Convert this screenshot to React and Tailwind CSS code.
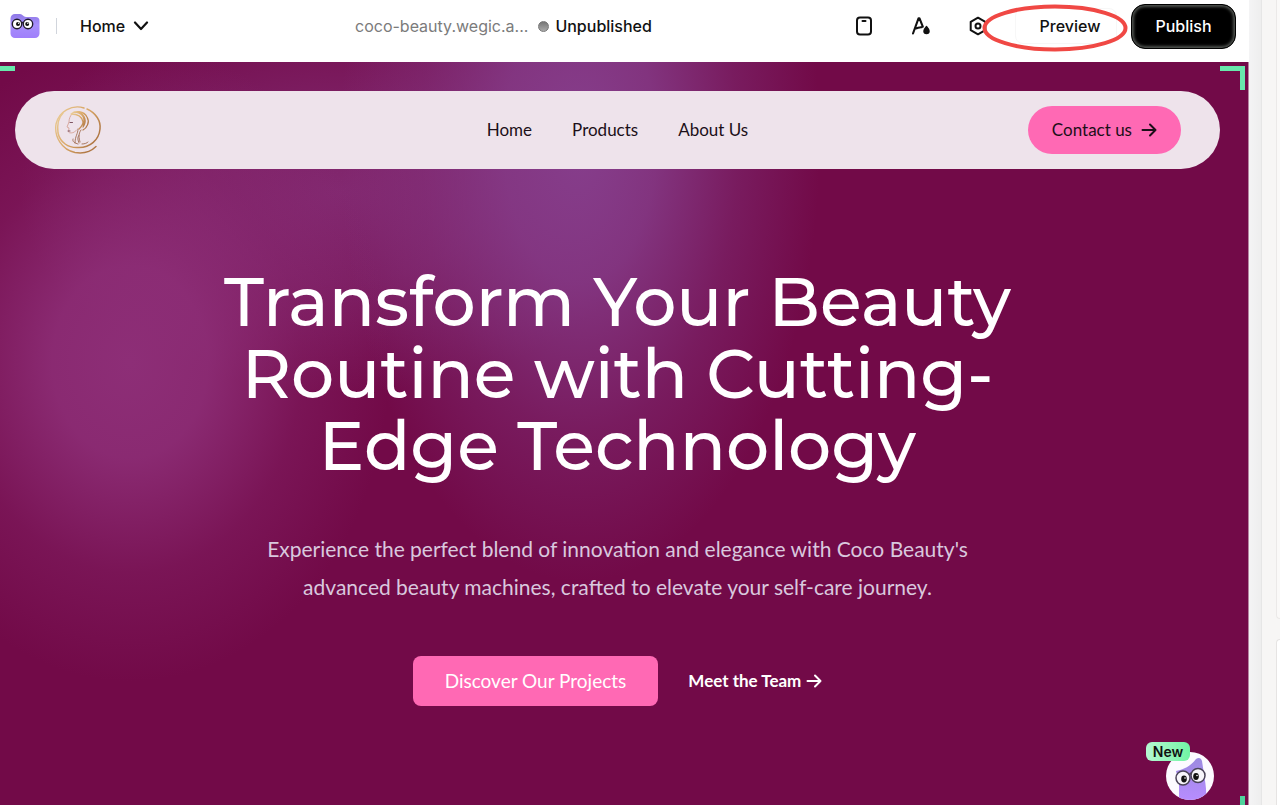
import React from "react";

const menuItems = ["Home", "Products", "About Us"];

const FolderLogo = () => (
    <svg viewBox="0 0 30 26" className="h-[26px] w-[30px]" aria-hidden="true">
        <defs>
            <linearGradient id="folder" x1="0" y1="0" x2="0" y2="1">
                <stop offset="0" stopColor="#8f79e6" />
                <stop offset="0.45" stopColor="#a78ffb" />
                <stop offset="1" stopColor="#a07ffb" />
            </linearGradient>
        </defs>
        <path
            d="M0.5 5.5a4.5 4.5 0 0 1 4.5-4.5h5c2.5 0 3.5 3 6 3h9.5a4 4 0 0 1 4 4v12.5a4.5 4.5 0 0 1-4.5 4.5h-20a4.5 4.5 0 0 1-4.5-4.5z"
            fill="url(#folder)"
        />
        <circle cx="7" cy="11" r="4.7" fill="#fff" stroke="#211c2c" strokeWidth="1.4" />
        <circle cx="18" cy="11" r="4.7" fill="#fff" stroke="#211c2c" strokeWidth="1.4" />
        <path d="M11.5 10q1-1 2 0" stroke="#211c2c" strokeWidth="1.5" fill="none" />
        <circle cx="8" cy="11" r="2" fill="#111" />
        <circle cx="17.2" cy="11" r="2" fill="#111" />
        <circle cx="8.6" cy="10.3" r="0.7" fill="#fff" />
        <circle cx="17.8" cy="10.3" r="0.7" fill="#fff" />
    </svg>
);

const ChevronIcon = () => (
    <svg viewBox="0 0 16 10" className="h-[10px] w-4" fill="none" stroke="#111" strokeWidth="2.2" strokeLinecap="round" strokeLinejoin="round" aria-hidden="true">
        <path d="M2 1.5l6 6.5 6-6.5" />
    </svg>
);

const DeviceIcon = () => (
    <svg viewBox="0 0 20 20" className="size-5" fill="none" stroke="#111" strokeWidth="2" aria-hidden="true">
        <rect x="3" y="1.5" width="14" height="17" rx="3" />
        <path d="M8.5 5h3" strokeLinecap="round" />
    </svg>
);

const ThemeIcon = () => (
    <svg viewBox="0 0 20 20" className="size-5" fill="none" stroke="#111" strokeWidth="2.1" strokeLinecap="round" strokeLinejoin="round" aria-hidden="true">
        <path d="M2 17.5L7.6 2.2h0.8l3.4 8.5M4.8 12.5c2-.3 4-1.5 5.6-1.2" />
        <path d="M15.5 10.5c1.6 1.9 2.6 3.1 2.6 4.4a2.6 2.6 0 0 1-5.2 0c0-1.3 1-2.5 2.6-4.4z" fill="#111" strokeWidth="1.3" />
    </svg>
);

const SettingsIcon = () => (
    <svg viewBox="0 0 20 20" className="size-5" fill="none" stroke="#111" strokeWidth="2" strokeLinejoin="round" aria-hidden="true">
        <path d="M10 1.7l7.3 4.1v8.4L10 18.3l-7.3-4.1V5.8z" />
        <circle cx="10" cy="10" r="2.5" />
    </svg>
);

const ArrowIcon = ({ className }) => (
    <svg viewBox="0 0 16 16" className={className} fill="none" stroke="currentColor" strokeLinecap="round" strokeLinejoin="round" aria-hidden="true">
        <path d="M1.5 8h13M9 2.5L14.5 8 9 13.5" />
    </svg>
);

const BrandLogo = () => (
    <svg viewBox="0 0 48 50" className="h-[50px] w-12" fill="none" strokeLinecap="round" aria-hidden="true">
        <defs>
            <linearGradient id="gold" x1="0" y1="0" x2="1" y2="0.6">
                <stop offset="0" stopColor="#ecd09c" />
                <stop offset="0.55" stopColor="#d9a766" />
                <stop offset="1" stopColor="#b07845" />
            </linearGradient>
        </defs>
        <path d="M30 3A22 22 0 0 0 2 19C0 32 8 45 21 47.5c9 1.5 16-1 21-6" stroke="url(#gold)" strokeWidth="1.4" />
        <path d="M33 4c9 4 14 12 13 20-1 11-10 18.5-21 18.5C14 43.5 6 37 4 28 3 20 5 12 9 8" stroke="url(#gold)" strokeWidth="1.5" />
        <path d="M18 9c-2 2-3 5-3 8l-2 5 2 1-.5 4c1 1.500 4 1 6 0l2-2" stroke="#d9aaa0" strokeWidth="1" />
        <path d="M17 9c4-4 13-3 16 3 3 5 0 11-4 13M17 9c6 0 11 2 12 8 0 3-2 5-4 7M20 7c8 0 12 6 9 13M25 7c6 3 8 9 4 15" stroke="url(#gold)" strokeWidth="1.3" />
        <path d="M24 24c0 5-3 7-3 14M27 25c-3 4-2 8-1 12M25 30c-2 3-1 5 0 8M19 34c-1 3 2 4 5 5M28 39c3 0 5-1 6-2" stroke="#a87860" strokeWidth="1" />
        <path d="M16 17.5h2.5M14 26h2" stroke="#7d5360" strokeWidth="1" />
    </svg>
);

const AssistantAvatar = () => (
    <svg viewBox="0 0 48 48" className="size-12" aria-hidden="true">
        <defs>
            <linearGradient id="monster" x1="0" y1="0" x2="0" y2="1">
                <stop offset="0" stopColor="#9c8ae0" />
                <stop offset="1" stopColor="#b78cff" />
            </linearGradient>
            <clipPath id="avatarClip">
                <circle cx="24" cy="24" r="24" />
            </clipPath>
        </defs>
        <circle cx="24" cy="24" r="24" fill="#fcfaff" />
        <g clipPath="url(#avatarClip)">
            <path d="M13 48V31L10 19c6-1 14-4 20-12 3-2 5-1 6 2l2 13c1 7 3 16 2 26z" fill="url(#monster)" />
        </g>
        <circle cx="17" cy="26" r="7" fill="#f7f5fb" stroke="#4a4358" strokeWidth="1.5" />
        <circle cx="32" cy="23.5" r="7" fill="#f7f5fb" stroke="#4a4358" strokeWidth="1.5" />
        <path d="M23.5 22.5q1-1.5 2.5-1" stroke="#4a4358" strokeWidth="1.5" fill="none" />
        <ellipse cx="18" cy="27" rx="2.8" ry="3.4" fill="#111" />
        <ellipse cx="30" cy="24.5" rx="2.8" ry="3.4" fill="#111" />
        <circle cx="19" cy="26" r="0.8" fill="#fff" />
        <circle cx="31" cy="23.5" r="0.8" fill="#fff" />
    </svg>
);

const Toolbar = () => (
    <header className="flex h-[62px] items-start bg-white pr-[13px] text-base font-medium text-[#111] font-[Inter,sans-serif]">
        <div className="flex h-[52px] w-[355px] items-center pl-[10px]">
            <FolderLogo />
            <span className="ml-4 h-4 w-px bg-gray-300" />
            <button type="button" className="ml-[23px] flex items-center gap-2">
                Home
                <ChevronIcon />
            </button>
        </div>
        <div className="flex h-[52px] items-center whitespace-nowrap">
            <span className="font-normal text-[#7b7b7b]">coco-beauty.wegic.a...</span>
            <span className="ml-[10px] size-[11px] rounded-full border border-[#777] bg-linear-to-b from-[#777] to-[#aaa]" />
            <span className="ml-[6px]">Unpublished</span>
        </div>
        <div className="ml-auto flex h-[52px] items-center">
            <div className="flex gap-[37px]">
                <button type="button" aria-label="Device"><DeviceIcon /></button>
                <button type="button" aria-label="Theme"><ThemeIcon /></button>
                <button type="button" aria-label="Settings"><SettingsIcon /></button>
            </div>
            <div className="relative ml-[27px] mr-[14px]">
                <button type="button" className="h-9 w-[102px] rounded-lg border border-[#f7f7f7] bg-white pl-2">
                    Preview
                </button>
                {/* red marker around the preview button */}
                <svg viewBox="0 0 146 48" className="pointer-events-none absolute -left-[33px] -top-1 h-12 w-[146px]" fill="none" aria-hidden="true">
                    <ellipse cx="73" cy="24" rx="70.5" ry="21.5" stroke="#f04844" strokeWidth="4" />
                </svg>
            </div>
            <button type="button" className="h-[45px] w-[105px] rounded-[14px] border border-black bg-black text-white shadow-[inset_0_0_3px_2px_#505450]">
                Publish
            </button>
        </div>
    </header>
);

const SiteNav = () => (
    <nav className="grid h-[78px] grid-cols-3 items-center rounded-full bg-[#eee3eb] px-[39px] text-[17px] text-[#1c0f18]">
        <a href="#home" aria-label="Coco Beauty"><BrandLogo /></a>
        <div className="flex justify-center gap-10 whitespace-nowrap">
            {menuItems.map((item) => (
                <a key={item} href="#menu">{item}</a>
            ))}
        </div>
        <a href="#contact" className="flex h-12 items-center gap-[9px] justify-self-end rounded-full bg-[#ff69b4] px-6">
            Contact us
            <ArrowIcon className="size-4 stroke-2" />
        </a>
    </nav>
);

const Hero = () => (
    <main className="relative flex-1 border-r border-[#b685a2] bg-[#720a48] bg-[radial-gradient(ellipse_240px_440px_at_580px_80px,#863e8c_0%,#863e8ccc_32%,#863e8c55_66%,#863e8c00_100%),radial-gradient(ellipse_260px_320px_at_130px_300px,#90327ce6_0%,#90327ccc_30%,#90327c44_66%,#90327c00_100%),radial-gradient(ellipse_320px_200px_at_340px_130px,#86307acc_0%,#86307a88_45%,#86307a00_100%)] pb-20 pl-[15px] pr-7 pt-[29px] font-[Lato,sans-serif]">
        <SiteNav />
        <section className="mx-auto flex max-w-[820px] flex-col items-center pt-[97px] text-center">
            <h1 className="text-[68px] font-medium leading-[72px] text-white font-[Montserrat,Inter,sans-serif]">
                Transform Your Beauty Routine with Cutting-Edge Technology
            </h1>
            <p className="mt-12 max-w-[740px] text-[21px] leading-[38px] text-[#d9c8de]">
                Experience the perfect blend of innovation and elegance with Coco Beauty's advanced beauty machines, crafted to elevate your self-care journey.
            </p>
            <div className="mt-[50px] flex items-center gap-[30px]">
                <button type="button" className="h-[50px] rounded-lg bg-[#ff69b4] px-8 text-[19px] text-white">
                    Discover Our Projects
                </button>
                <a href="#team" className="flex items-center gap-[5px] text-[17px] font-bold text-white">
                    Meet the Team
                    <ArrowIcon className="size-4 stroke-2" />
                </a>
            </div>
        </section>

        {/* selection corners */}
        <span className="absolute left-0 top-1 h-[5px] w-[15px] bg-[#68e8ac]" />
        <span className="absolute right-[3px] top-1 h-6 w-[25px] border-r-5 border-t-5 border-[#68e8ac]" />
        <span className="absolute bottom-0 right-[3px] h-[9px] w-[5px] bg-[#4fd39c]" />

        <button type="button" className="absolute bottom-[5px] right-[34px] font-[Inter,sans-serif]">
            <AssistantAvatar />
            <span className="absolute -left-5 -top-[10px] flex h-[19px] w-11 items-center justify-center rounded-md bg-linear-to-r from-[#b5f7d2] to-[#6ff5a4] text-sm font-semibold text-[#111]">
                New
            </span>
        </button>
    </main>
);

const SideRail = () => (
    <aside className="flex w-[31px] shrink-0 bg-[#f7f6f5]">
        <div className="w-[13px] border-r border-[#e6e6e6] bg-linear-to-r from-[#f4f4f5] to-[#eeeeee]" />
        <div className="ml-auto flex w-1 flex-col justify-end gap-5">
            <div className="flex-1 rounded-bl-lg border-b border-l border-[#ebe9e8] bg-[#faf9f8]" />
            <div className="h-[166px] rounded-tl-lg border-l border-t border-[#e6e4e3] bg-white" />
        </div>
    </aside>
);

const App = () => {
    return (
        <div className="flex min-h-screen bg-white">
            <div className="flex min-w-0 flex-1 flex-col">
                <Toolbar />
                <Hero />
            </div>
            <SideRail />
        </div>
    );
};

export default App;
